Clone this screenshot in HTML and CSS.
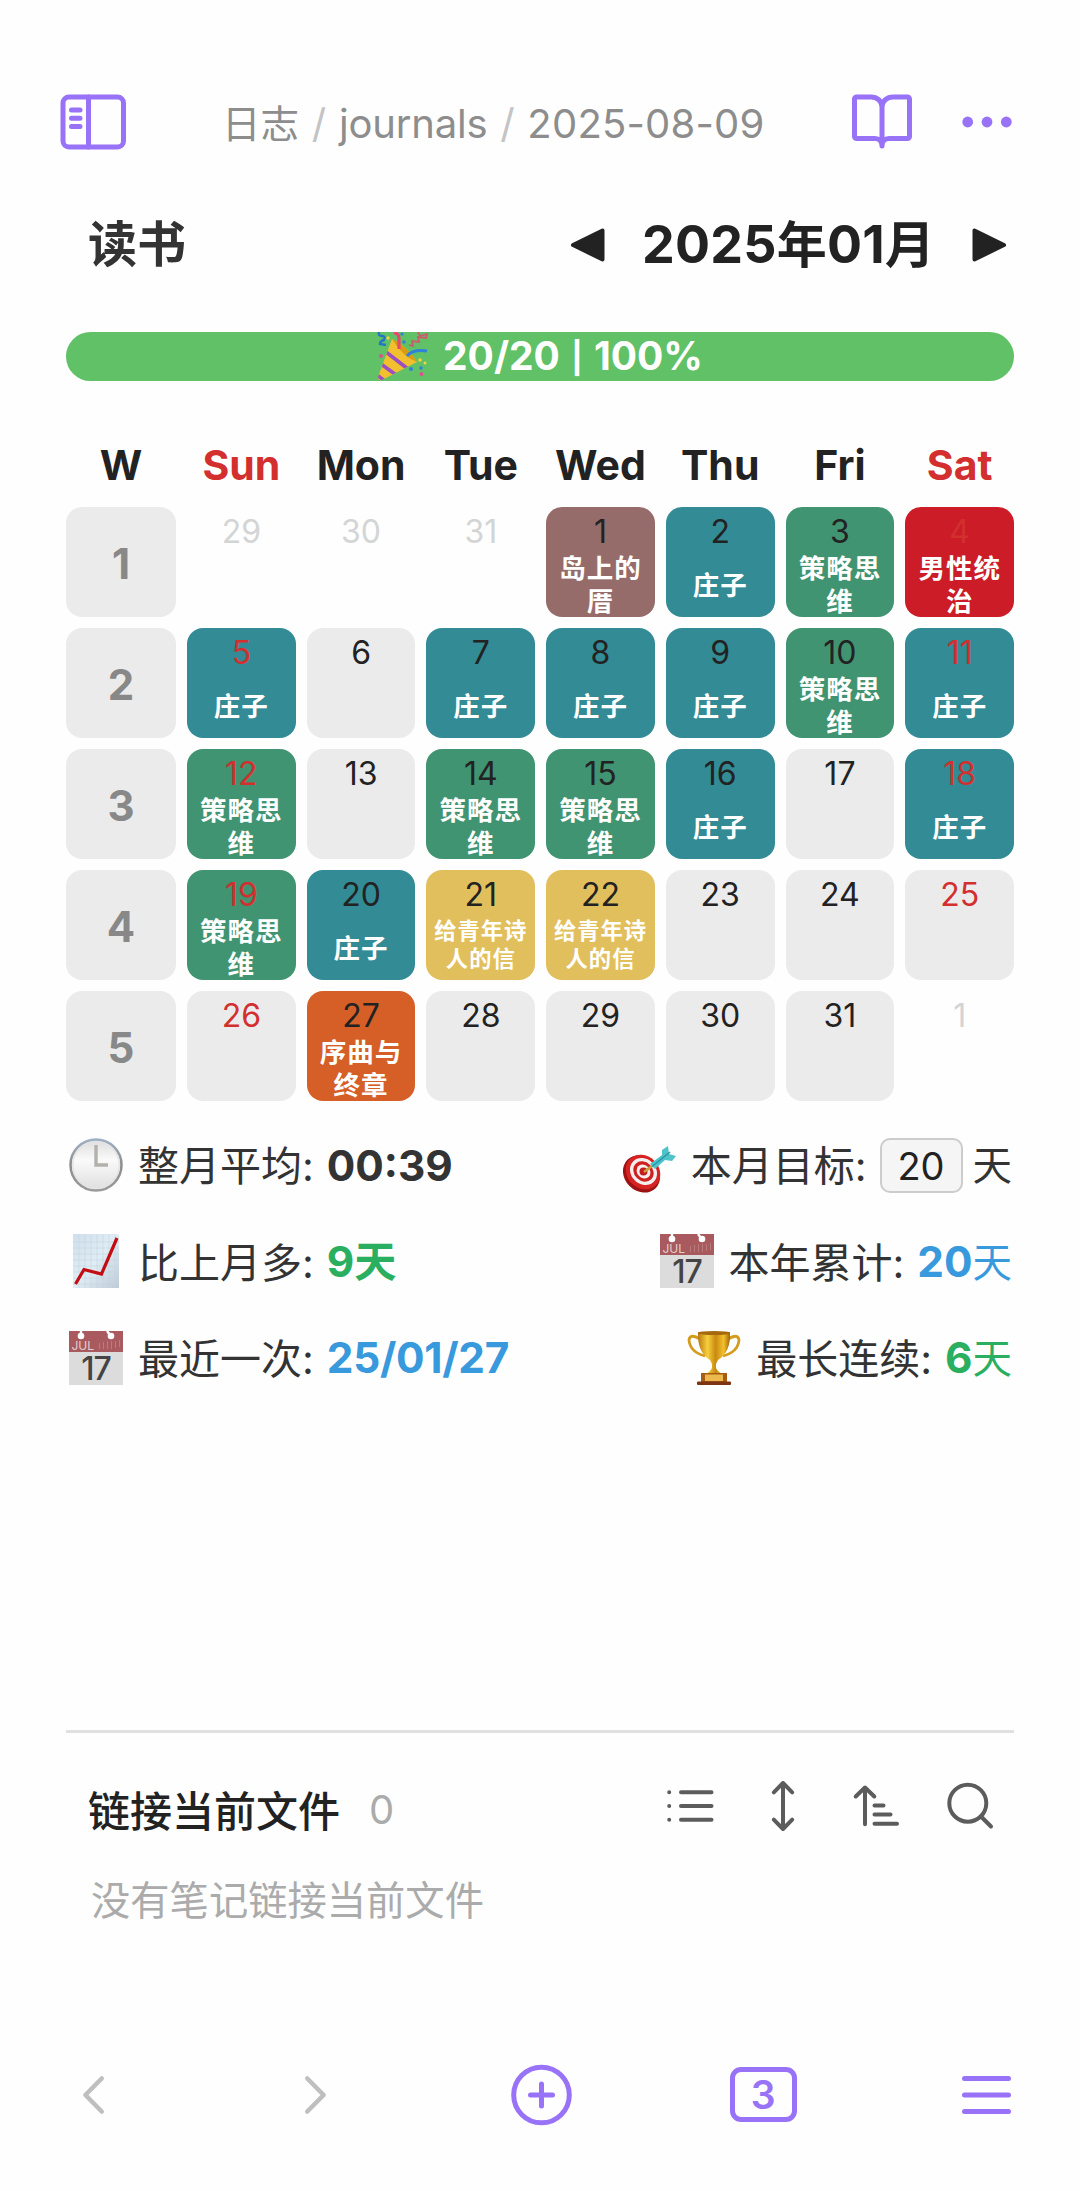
FILE: index.html
```html
<!DOCTYPE html>
<html lang="zh-CN">
<head>
    <meta charset="UTF-8">
    <meta name="viewport" content="width=device-width, initial-scale=1.0">
    <title>2025-08-09</title>

    <link rel="stylesheet" href="styles.css">
</head>
<body>

    <header class="topbar">
        <svg class="icon-sidebar" width="68" height="58" viewBox="0 0 68 58" fill="none" stroke="#9873f7" stroke-width="5" stroke-linecap="round">
            <rect x="4" y="4" width="60.500" height="50" rx="6"/>
            <path d="M29.500 4v50"/>
            <path d="M12.500 17h8.500M12.500 25.300h8.500M12.500 33.500h8.500"/>
        </svg>
        <div class="breadcrumb">
            <span class="crumb-cjk">日志</span><span class="slash">/</span><span class="crumb-folder">journals</span><span class="slash">/</span><span class="crumb-file">2025-08-09</span>
        </div>
        <svg class="icon-book" width="64" height="58" viewBox="0 0 64 58" fill="none" stroke="#9873f7" stroke-width="5" stroke-linecap="round" stroke-linejoin="round">
            <path d="M32 14C32 8 27 4 21 4H6.500A2 2 0 0 0 4.500 6V43.500A2 2 0 0 0 6.500 45.500H25C29 45.500 32 48 32 53C32 48 35 45.500 39 45.500H57.500A2 2 0 0 0 59.500 43.500V6A2 2 0 0 0 57.500 4H43C37 4 32 8 32 14V53"/>
        </svg>
        <svg width="50" height="12" viewBox="0 0 50 12" fill="#9873f7">
            <circle cx="5.700" cy="6" r="5.400"/>
            <circle cx="25" cy="6" r="5.400"/>
            <circle cx="44.300" cy="6" r="5.400"/>
        </svg>
    </header>

    <main>
        <div class="month-bar">
            <h1>读书</h1>
            <div class="month-nav">
                <svg width="34" height="34" viewBox="0 0 34 34" fill="#222" stroke="#222" stroke-width="4" stroke-linejoin="round"><path d="M2 17L31.500 2.500V31.500Z"/></svg>
                <span class="month">2025<span class="han">年</span>01<span class="han">月</span></span>
                <svg width="34" height="34" viewBox="0 0 34 34" fill="#222" stroke="#222" stroke-width="4" stroke-linejoin="round"><path d="M32 17L2.500 2.500V31.500Z"/></svg>
            </div>
        </div>

        <div class="progress">
            <svg width="51" height="49" viewBox="0 0 51 49" fill="none" stroke-width="2.400">
                <defs>
                    <clipPath id="cone"><path d="M1 45L15 7Q30 14 40 30L5 48Q1 49 1 45Z"/></clipPath>
                </defs>
                <g clip-path="url(#cone)">
                    <path d="M0 0H51V49H0Z" fill="#f2c02e"/>
                    <path d="M9 20L31 37M4 32L22 45M0 43L9 50" stroke="#9a4fc4" stroke-width="3.600"/>
                </g>
                <path d="M15 7Q30 14 40 30Q26 25 15 7Z" fill="#d99a16"/>
                <path d="M2 0q-1 4 3 4t2 4q-4 1-4 4l6 1" stroke="#2474c8"/>
                <path d="M17 1q5 0 5 6v10" stroke="#e6476c" stroke-width="3.200"/>
                <path d="M41 0l2 4 7-2-1 4-8-1 1 5-7-1 1 5-4-1" stroke="#cf5a6c" stroke-width="1.800"/>
                <path d="M30 24q6-7 20-5" stroke="#2f80d8" stroke-width="3"/>
                <g fill="#e0508e"><circle cx="4" cy="24" r="2"/><circle cx="44.500" cy="42" r="1.900"/></g>
                <g fill="#2f80d8"><circle cx="27" cy="10" r="1.700"/><circle cx="34" cy="37" r="2"/><circle cx="44" cy="36" r="1.700"/><circle cx="25" cy="2" r="1.600"/></g>
                <g fill="#f3d23a"><circle cx="11" cy="6" r="1.700"/><circle cx="43" cy="28" r="1.800"/><circle cx="48" cy="31" r="1.500"/></g>
            </svg>
            <span>20/20 <span class="pipe">|</span> 100%</span>
        </div>

        <div class="calendar">
            <div class="head">W</div>
            <div class="head red">Sun</div>
            <div class="head">Mon</div>
            <div class="head">Tue</div>
            <div class="head">Wed</div>
            <div class="head">Thu</div>
            <div class="head">Fri</div>
            <div class="head red">Sat</div>

            <div class="week">1</div>
            <div class="day other">29</div>
            <div class="day other">30</div>
            <div class="day other">31</div>
            <div class="day island">1<p>岛上的厝</p></div>
            <div class="day zhuangzi">2<p>庄子</p></div>
            <div class="day strategy">3<p>策略思维</p></div>
            <div class="day rule red">4<p>男性统治</p></div>

            <div class="week">2</div>
            <div class="day zhuangzi red">5<p>庄子</p></div>
            <div class="day">6</div>
            <div class="day zhuangzi">7<p>庄子</p></div>
            <div class="day zhuangzi">8<p>庄子</p></div>
            <div class="day zhuangzi">9<p>庄子</p></div>
            <div class="day strategy">10<p>策略思维</p></div>
            <div class="day zhuangzi red">11<p>庄子</p></div>

            <div class="week">3</div>
            <div class="day strategy red">12<p>策略思维</p></div>
            <div class="day">13</div>
            <div class="day strategy">14<p>策略思维</p></div>
            <div class="day strategy">15<p>策略思维</p></div>
            <div class="day zhuangzi">16<p>庄子</p></div>
            <div class="day">17</div>
            <div class="day zhuangzi red">18<p>庄子</p></div>

            <div class="week">4</div>
            <div class="day strategy red">19<p>策略思维</p></div>
            <div class="day zhuangzi">20<p>庄子</p></div>
            <div class="day letters">21<p>给青年诗人的信</p></div>
            <div class="day letters">22<p>给青年诗人的信</p></div>
            <div class="day">23</div>
            <div class="day">24</div>
            <div class="day red">25</div>

            <div class="week">5</div>
            <div class="day red">26</div>
            <div class="day prelude">27<p>序曲与终章</p></div>
            <div class="day">28</div>
            <div class="day">29</div>
            <div class="day">30</div>
            <div class="day">31</div>
            <div class="day other">1</div>
        </div>

        <div class="stats">
            <div class="stat-row">
                <div class="stat">
                    <svg width="54" height="54" viewBox="0 0 54 54">
                        <defs>
                            <linearGradient id="face" x1="0" x2="0" y1="0" y2="1">
                                <stop offset="0" stop-color="#dcdcdc"/>
                                <stop offset="0.4" stop-color="#fafafa"/>
                                <stop offset="1" stop-color="#dedede"/>
                            </linearGradient>
                            <linearGradient id="rim" x1="0" x2="0" y1="0" y2="1">
                                <stop offset="0" stop-color="#9fb0c4"/>
                                <stop offset="0.5" stop-color="#8d8d8d"/>
                                <stop offset="1" stop-color="#9a9a9a"/>
                            </linearGradient>
                        </defs>
                        <circle cx="27" cy="27" r="25.500" fill="url(#face)" stroke="url(#rim)" stroke-width="2.500"/>
                        <circle cx="27" cy="27" r="23.300" fill="none" stroke="#e4e4e4" stroke-width="1.500"/>
                        <path d="M27 7V27H39" fill="none" stroke="#b4b1ac" stroke-width="3.400"/>
                    </svg>
                    <span class="label">整月平均:</span><b>00:39</b>
                </div>
                <div class="stat right">
                    <svg width="54" height="54" viewBox="0 0 54 54">
                        <ellipse cx="19.500" cy="36" rx="17" ry="20" transform="rotate(-45 19.500 36)" fill="#9d1212"/>
                        <ellipse cx="21" cy="34" rx="16" ry="18.500" transform="rotate(-45 21 34)" fill="#d62222"/>
                        <ellipse cx="21.500" cy="33.500" rx="12.500" ry="14.500" transform="rotate(-45 21.500 33.500)" fill="#f4eeee"/>
                        <ellipse cx="21.500" cy="33.500" rx="9.300" ry="11" transform="rotate(-45 21.500 33.500)" fill="#cf2020"/>
                        <ellipse cx="21.500" cy="33.500" rx="6.300" ry="7.500" transform="rotate(-45 21.500 33.500)" fill="#f4eeee"/>
                        <circle cx="21.500" cy="33.500" r="4" fill="#c41c1c"/>
                        <path d="M22 34L30 28" stroke="#c8a23a" stroke-width="2.500"/>
                        <path d="M28 26L40 17L40 12L46 8L47 16L54 18L50 23L43 22L33 31Z" fill="#4fc3cc"/>
                        <path d="M30 28.500L48 14" stroke="#2a949f" stroke-width="1.500"/>
                    </svg>
                    <span class="label">本月目标:</span><span class="goal">20</span><span class="unit">天</span>
                </div>
            </div>
            <div class="stat-row">
                <div class="stat">
                    <svg width="54" height="54" viewBox="0 0 54 54" fill="none">
                        <defs>
                            <linearGradient id="paper" x1="0" x2="1" y1="0" y2="1">
                                <stop offset="0" stop-color="#d0dfeb"/>
                                <stop offset="0.5" stop-color="#e0edf4"/>
                                <stop offset="1" stop-color="#bfccd8"/>
                            </linearGradient>
                        </defs>
                        <rect x="4" width="46" height="54" fill="url(#paper)"/>
                        <path d="M4 8h46M4 14h46M4 20h46M4 26h46M4 32h46M4 38h46M4 44h46M4 50h46M10 0v54M16 0v54M22 0v54M28 0v54M34 0v54M40 0v54M46 0v54" stroke="#bfd2df" stroke-width="0.500"/>
                        <path d="M6.500 50L15 35.500L32.500 40L48 4" stroke="#c40d12" stroke-width="3.200"/>
                    </svg>
                    <span class="label">比上月多:</span><b class="green">9天</b>
                </div>
                <div class="stat right">
                    <svg width="54" height="54" viewBox="0 0 54 54">
                        <rect width="54" height="54" fill="#dcdcdc"/>
                        <rect width="54" height="21" fill="#a85a5e"/>
                        <path d="M12 0v4M38 0l3 4" stroke="#fff" stroke-width="2.400"/>
                        <circle cx="12" cy="5" r="3.300" fill="#fff"/>
                        <circle cx="42" cy="5" r="3.300" fill="#fff"/>
                        <path d="M30.500 12v6M34.500 11v7M38.500 10v8M42.500 10v8M46.500 10v7M50.500 9v7" stroke="#bb7a7c"/>
                        <text x="2.500" y="18.500" class="cal-month">JUL</text>
                        <text x="27" y="48.500" text-anchor="middle" class="cal-day">17</text>
                    </svg>
                    <span class="label">本年累计:</span><b class="blue">20</b><span class="unit blue">天</span>
                </div>
            </div>
            <div class="stat-row">
                <div class="stat">
                    <svg width="54" height="54" viewBox="0 0 54 54">
                        <rect width="54" height="54" fill="#dcdcdc"/>
                        <rect width="54" height="21" fill="#a85a5e"/>
                        <path d="M12 0v4M38 0l3 4" stroke="#fff" stroke-width="2.400"/>
                        <circle cx="12" cy="5" r="3.300" fill="#fff"/>
                        <circle cx="42" cy="5" r="3.300" fill="#fff"/>
                        <path d="M30.500 12v6M34.500 11v7M38.500 10v8M42.500 10v8M46.500 10v7M50.500 9v7" stroke="#bb7a7c"/>
                        <text x="2.500" y="18.500" class="cal-month">JUL</text>
                        <text x="27" y="48.500" text-anchor="middle" class="cal-day">17</text>
                    </svg>
                    <span class="label">最近一次:</span><b class="blue date">25/01/27</b>
                </div>
                <div class="stat right">
                    <svg width="54" height="54" viewBox="0 0 54 54">
                        <defs>
                            <linearGradient id="gold" x1="0" x2="1" y1="0" y2="0">
                                <stop offset="0" stop-color="#b87a10"/>
                                <stop offset="0.3" stop-color="#f6cf3c"/>
                                <stop offset="0.55" stop-color="#c98a12"/>
                                <stop offset="0.8" stop-color="#f3c02c"/>
                                <stop offset="1" stop-color="#9c6208"/>
                            </linearGradient>
                        </defs>
                        <path d="M13 8Q3 2 2 9Q3 21 18 25M41 8Q51 2 52 9Q51 21 36 25" fill="none" stroke="#d49b1c" stroke-width="2.800"/>
                        <path d="M11 1H43Q44 21 31 29L29 33V37Q31 41 36 43H18Q23 41 25 37V33L23 29Q10 21 11 1Z" fill="url(#gold)"/>
                        <ellipse cx="27" cy="2" rx="16" ry="2" fill="#a4690c"/>
                        <rect x="14" y="42" width="26" height="9" fill="#a75c14"/>
                        <rect x="18" y="43.500" width="18" height="6.500" fill="#edb94c"/>
                        <rect x="10" y="50.500" width="34" height="3.500" rx="1" fill="#7d3412"/>
                    </svg>
                    <span class="label">最长连续:</span><b class="green">6</b><span class="unit green">天</span>
                </div>
            </div>
        </div>

        <section class="backlinks">
            <div class="backlinks-head">
                <h2>链接当前文件</h2>
                <span class="count">0</span>
                <div class="tools">
                    <svg width="48" height="34" viewBox="0 0 48 34" fill="none" stroke="#5c5c5c" stroke-width="4" stroke-linecap="round">
                        <path d="M3.200 3.200h.01M3.200 17h.01M3.200 30.800h.01M15 3.200h30.500M15 17h30.500M15 30.800h30.500"/>
                    </svg>
                    <svg width="24" height="52" viewBox="0 0 24 52" fill="none" stroke="#5c5c5c" stroke-width="4" stroke-linecap="round" stroke-linejoin="round">
                        <path d="M12 3V49M2.800 12.300L12 3L21.200 12.300M2.800 39.700L12 49L21.200 39.700"/>
                    </svg>
                    <svg class="icon-sort" width="48" height="42" viewBox="0 0 48 42" fill="none" stroke="#5c5c5c" stroke-width="4" stroke-linecap="round" stroke-linejoin="round">
                        <path d="M13 39.300V2.500M3.700 11.500L13 2.500L22.300 11.500M22.500 20.500h9M22.500 29.500h16M22.500 38.800h22.500"/>
                    </svg>
                    <svg width="48" height="48" viewBox="0 0 48 48" fill="none" stroke="#5c5c5c" stroke-width="4" stroke-linecap="round">
                        <circle cx="21.800" cy="21.200" r="18.500"/>
                        <path d="M35 34.500L45 44.500"/>
                    </svg>
                </div>
            </div>
            <p class="empty">没有笔记链接当前文件</p>
        </section>
    </main>

    <footer class="navbar">
        <svg width="67" height="42" viewBox="0 0 24 42" fill="none" stroke="#bfbfbf" stroke-width="4.600" stroke-linecap="round" stroke-linejoin="round">
            <path d="M20.200 4.500L3.900 21L20.200 37.500"/>
        </svg>
        <svg width="67" height="42" viewBox="0 0 24 42" fill="none" stroke="#bfbfbf" stroke-width="4.600" stroke-linecap="round" stroke-linejoin="round">
            <path d="M2.800 4.500L19.100 21L2.800 37.500"/>
        </svg>
        <svg width="67" height="62" viewBox="0 0 62 62" fill="none" stroke="#9873f7" stroke-width="5" stroke-linecap="round">
            <circle cx="32" cy="31" r="27.800"/>
            <path d="M21 31h22M32 20v22"/>
        </svg>
        <span class="tabs">3</span>
        <svg width="67" height="40" viewBox="0 0 50 40" fill="none" stroke="#9873f7" stroke-width="5" stroke-linecap="round">
            <path d="M3 3.500h44M3 20h44M3 36.500h44"/>
        </svg>
    </footer>
</body>
</html>
```

FILE: styles.css
```css
* {
    box-sizing: border-box;
}
body {
    margin: 0;
    background-color: #fefefe;
    color: #222;
    font-family: Inter, "Noto Sans CJK SC", sans-serif;
    font-size: 41px;
    line-height: 1.2;
}
svg {
    display: block;
    flex: none;
    overflow: visible;
}
h1, h2, p {
    margin: 0;
}
.red {
    color: #d32f2f;
}

/* Top bar */
.topbar {
    display: flex;
    align-items: center;
    height: 177px;
    padding: 66px 68px 0 59px;
}
.breadcrumb {
    flex: 1;
    display: flex;
    align-items: baseline;
    padding: 4px 0 0 95px;
    font-size: 40px;
    color: #8d8d8d;
    white-space: nowrap;
}
.crumb-cjk {
    font-size: 38.5px;
}
.crumb-folder {
    letter-spacing: -0.2px;
}
.crumb-file {
    letter-spacing: 0.2px;
}
.slash {
    color: #c4c4c4;
    padding: 0 12.8px;
}
.icon-book {
    margin-right: 48px;
}

/* Month title */
main {
    padding: 0 66px;
}
.month-bar {
    display: flex;
    align-items: center;
    justify-content: space-between;
    height: 136px;
    padding: 0 8px 0 22px;
}
h1 {
    font-size: 49px;
    color: #333;
}
.month-nav {
    display: flex;
    align-items: center;
    gap: 37px;
}
.month {
    font-size: 52px;
    font-weight: 700;
    letter-spacing: 0.2px;
}
.han {
    font-size: 50px;
}

/* Progress */
.progress {
    display: flex;
    justify-content: center;
    align-items: center;
    gap: 15px;
    height: 49px;
    margin-top: 19px;
    border-radius: 25px;
    background-color: #60c166;
    color: #fff;
    font-size: 39px;
    font-weight: 700;
    overflow: hidden;
}
.pipe {
    padding: 0 2px;
    font-size: 31px;
    vertical-align: 1px;
    line-height: 1;
}

/* Calendar */
.calendar {
    display: grid;
    grid-template-columns: 110px repeat(7, 1fr);
    grid-template-rows: 73px;
    grid-auto-rows: 109.7px;
    gap: 11.3px 11px;
    margin-top: 42px;
}
.head {
    display: flex;
    align-items: center;
    justify-content: center;
    padding-top: 13px;
    font-weight: 700;
}
.week {
    display: flex;
    align-items: center;
    justify-content: center;
    padding-top: 4px;
    border-radius: 16px;
    background-color: #ebebeb;
    color: #888;
    font-weight: 700;
    font-size: 42px;
}
.day {
    display: flex;
    flex-direction: column;
    align-items: center;
    padding-top: 4.5px;
    border-radius: 16px;
    background-color: #ebebeb;
    font-size: 32px;
    line-height: 40px;
}
.day p {
    display: flex;
    align-items: center;
    justify-content: center;
    flex: none;
    width: 86px;
    height: 67px;
    color: #fff;
    font-size: 26.5px;
    font-weight: 700;
    letter-spacing: 1px;
    line-height: 33px;
    text-align: center;
}
.day.other {
    background: none;
    color: #d3d5d5;
}
.island {
    background-color: #966c6b;
}
.zhuangzi {
    background-color: #338b95;
}
.strategy {
    background-color: #419472;
}
.rule {
    background-color: #cb1c27;
}
.letters {
    background-color: #e2bf5d;
}
.letters p {
    width: 98px;
    height: 60px;
    font-size: 22.3px;
    line-height: 28px;
}
.prelude {
    background-color: #d65f27;
}

/* Statistics */
.stats {
    margin-top: 16px;
    color: #333;
}
.stat-row {
    display: flex;
    justify-content: space-between;
    height: 96.3px;
    padding: 0 2px 0 3px;
}
.stat {
    display: flex;
    align-items: center;
}
.stat .label {
    margin: 0 13px 0 15px;
    padding-top: 4px;
}
.stat b {
    padding-top: 2px;
    font-size: 42.3px;
}
.date {
    letter-spacing: -0.3px;
}
.unit {
    padding-top: 4px;
    font-size: 39.5px;
}
.goal {
    width: 83px;
    height: 55px;
    margin-right: 10px;
    border: 2px solid #ccc;
    border-radius: 10px;
    background-color: #f5f5f5;
    color: #222;
    font-size: 38px;
    line-height: 52px;
    text-align: center;
}
.green {
    color: #2aaf61;
}
.blue {
    color: #3899dc;
}
.cal-month {
    font-size: 12px;
    fill: #e6cfcf;
}
.cal-day {
    font-size: 32px;
    font-weight: 500;
    letter-spacing: -1px;
    fill: #444;
}

/* Backlinks */
.backlinks {
    margin-top: 324px;
    border-top: 3px solid #e0e0e0;
}
.backlinks-head {
    display: flex;
    align-items: center;
    height: 147px;
    padding: 0 20px 0 22px;
}
h2 {
    padding-top: 11px;
    font-size: 42px;
    font-weight: 500;
}
.count {
    margin-left: 29px;
    padding-top: 8px;
    font-size: 40px;
    font-weight: 400;
    color: #ababab;
}
.tools {
    display: flex;
    align-items: center;
    gap: 57px;
    margin-left: auto;
}
.icon-sort {
    margin-right: -11px;
}
.empty {
    padding: 1px 0 0 25px;
    font-size: 39.3px;
    line-height: 40px;
    color: #ababab;
}

/* Bottom bar */
.navbar {
    display: flex;
    align-items: center;
    justify-content: space-between;
    height: 62px;
    margin-top: 143px;
    padding: 0 60px;
}
.tabs {
    width: 67px;
    height: 55px;
    border: 5px solid #9873f7;
    border-radius: 11px;
    color: #9873f7;
    font-size: 39px;
    font-weight: 600;
    line-height: 46px;
    text-align: center;
}
```
